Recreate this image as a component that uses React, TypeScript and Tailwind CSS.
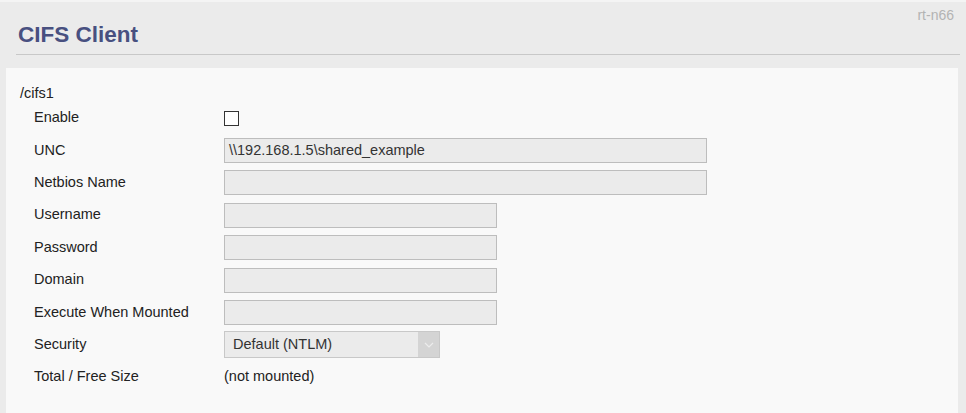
import React from "react";

const font = { fontFamily: '"Liberation Sans", Arial, sans-serif' };

function Row({ label, children }: { label: string; children?: React.ReactNode }) {
  return (
    <div className="flex h-[32.4px] items-center">
      <div className="w-[204px] shrink-0 pl-[14px] text-[14.5px] text-[#222]">{label}</div>
      <div className="flex items-center">{children}</div>
    </div>
  );
}

function Field({ wide, value }: { wide?: boolean; value?: string }) {
  return (
    <div
      className={
        (wide ? "w-[483px]" : "w-[273px]") +
        " flex h-[25px] items-center border border-[#bdbdbd] bg-[#ebebeb] px-[4px] text-[14.5px] text-[#333]"
      }
    >
      {value}
    </div>
  );
}

export default function App() {
  return (
    <div className="min-h-[413px] border-t-[2px] border-[#f4f4f4] bg-[#ebebeb]" style={font}>
      <div className="flex justify-end pr-[12px] pt-[5px] text-[14px] leading-[16px] text-[#b3b3b3]">rt-n66</div>
      <div className="ml-[16px] mr-[6px] border-b border-[#c8c8c8] pb-[7px] pl-[2px]">
        <h1 className="text-[22.5px] font-bold leading-[24px] text-[#485080]">CIFS Client</h1>
      </div>
      <div className="ml-[6px] mr-[8px] mt-[13px] min-h-[345px] bg-[#f9f9f9] pl-[14px] pt-[16px]">
        <div className="text-[14.5px] leading-[18px] text-[#222]">/cifs1</div>
        <Row label="Enable">
          <div className="h-[15px] w-[15px] border border-[#333] bg-white" />
        </Row>
        <Row label="UNC">
          <Field wide value="\\192.168.1.5\shared_example" />
        </Row>
        <Row label="Netbios Name">
          <Field wide />
        </Row>
        <Row label="Username">
          <Field />
        </Row>
        <Row label="Password">
          <Field />
        </Row>
        <Row label="Domain">
          <Field />
        </Row>
        <Row label="Execute When Mounted">
          <Field />
        </Row>
        <Row label="Security">
          <div className="flex h-[27px] w-[216px] items-stretch border border-[#c8c8c8] bg-[#ebebeb] text-[14.5px] text-[#333]">
            <div className="flex flex-1 items-center pl-[8px]">Default (NTLM)</div>
            <div className="flex w-[21px] items-center justify-center bg-[#d4d4d4]">
              <svg width="10" height="6" viewBox="0 0 10 6" fill="none">
                <path d="M1 1l4 4 4-4" stroke="#ececec" strokeWidth="1.2" />
              </svg>
            </div>
          </div>
        </Row>
        <Row label="Total / Free Size">
          <span className="text-[14.5px] text-[#222]">(not mounted)</span>
        </Row>
      </div>
    </div>
  );
}
